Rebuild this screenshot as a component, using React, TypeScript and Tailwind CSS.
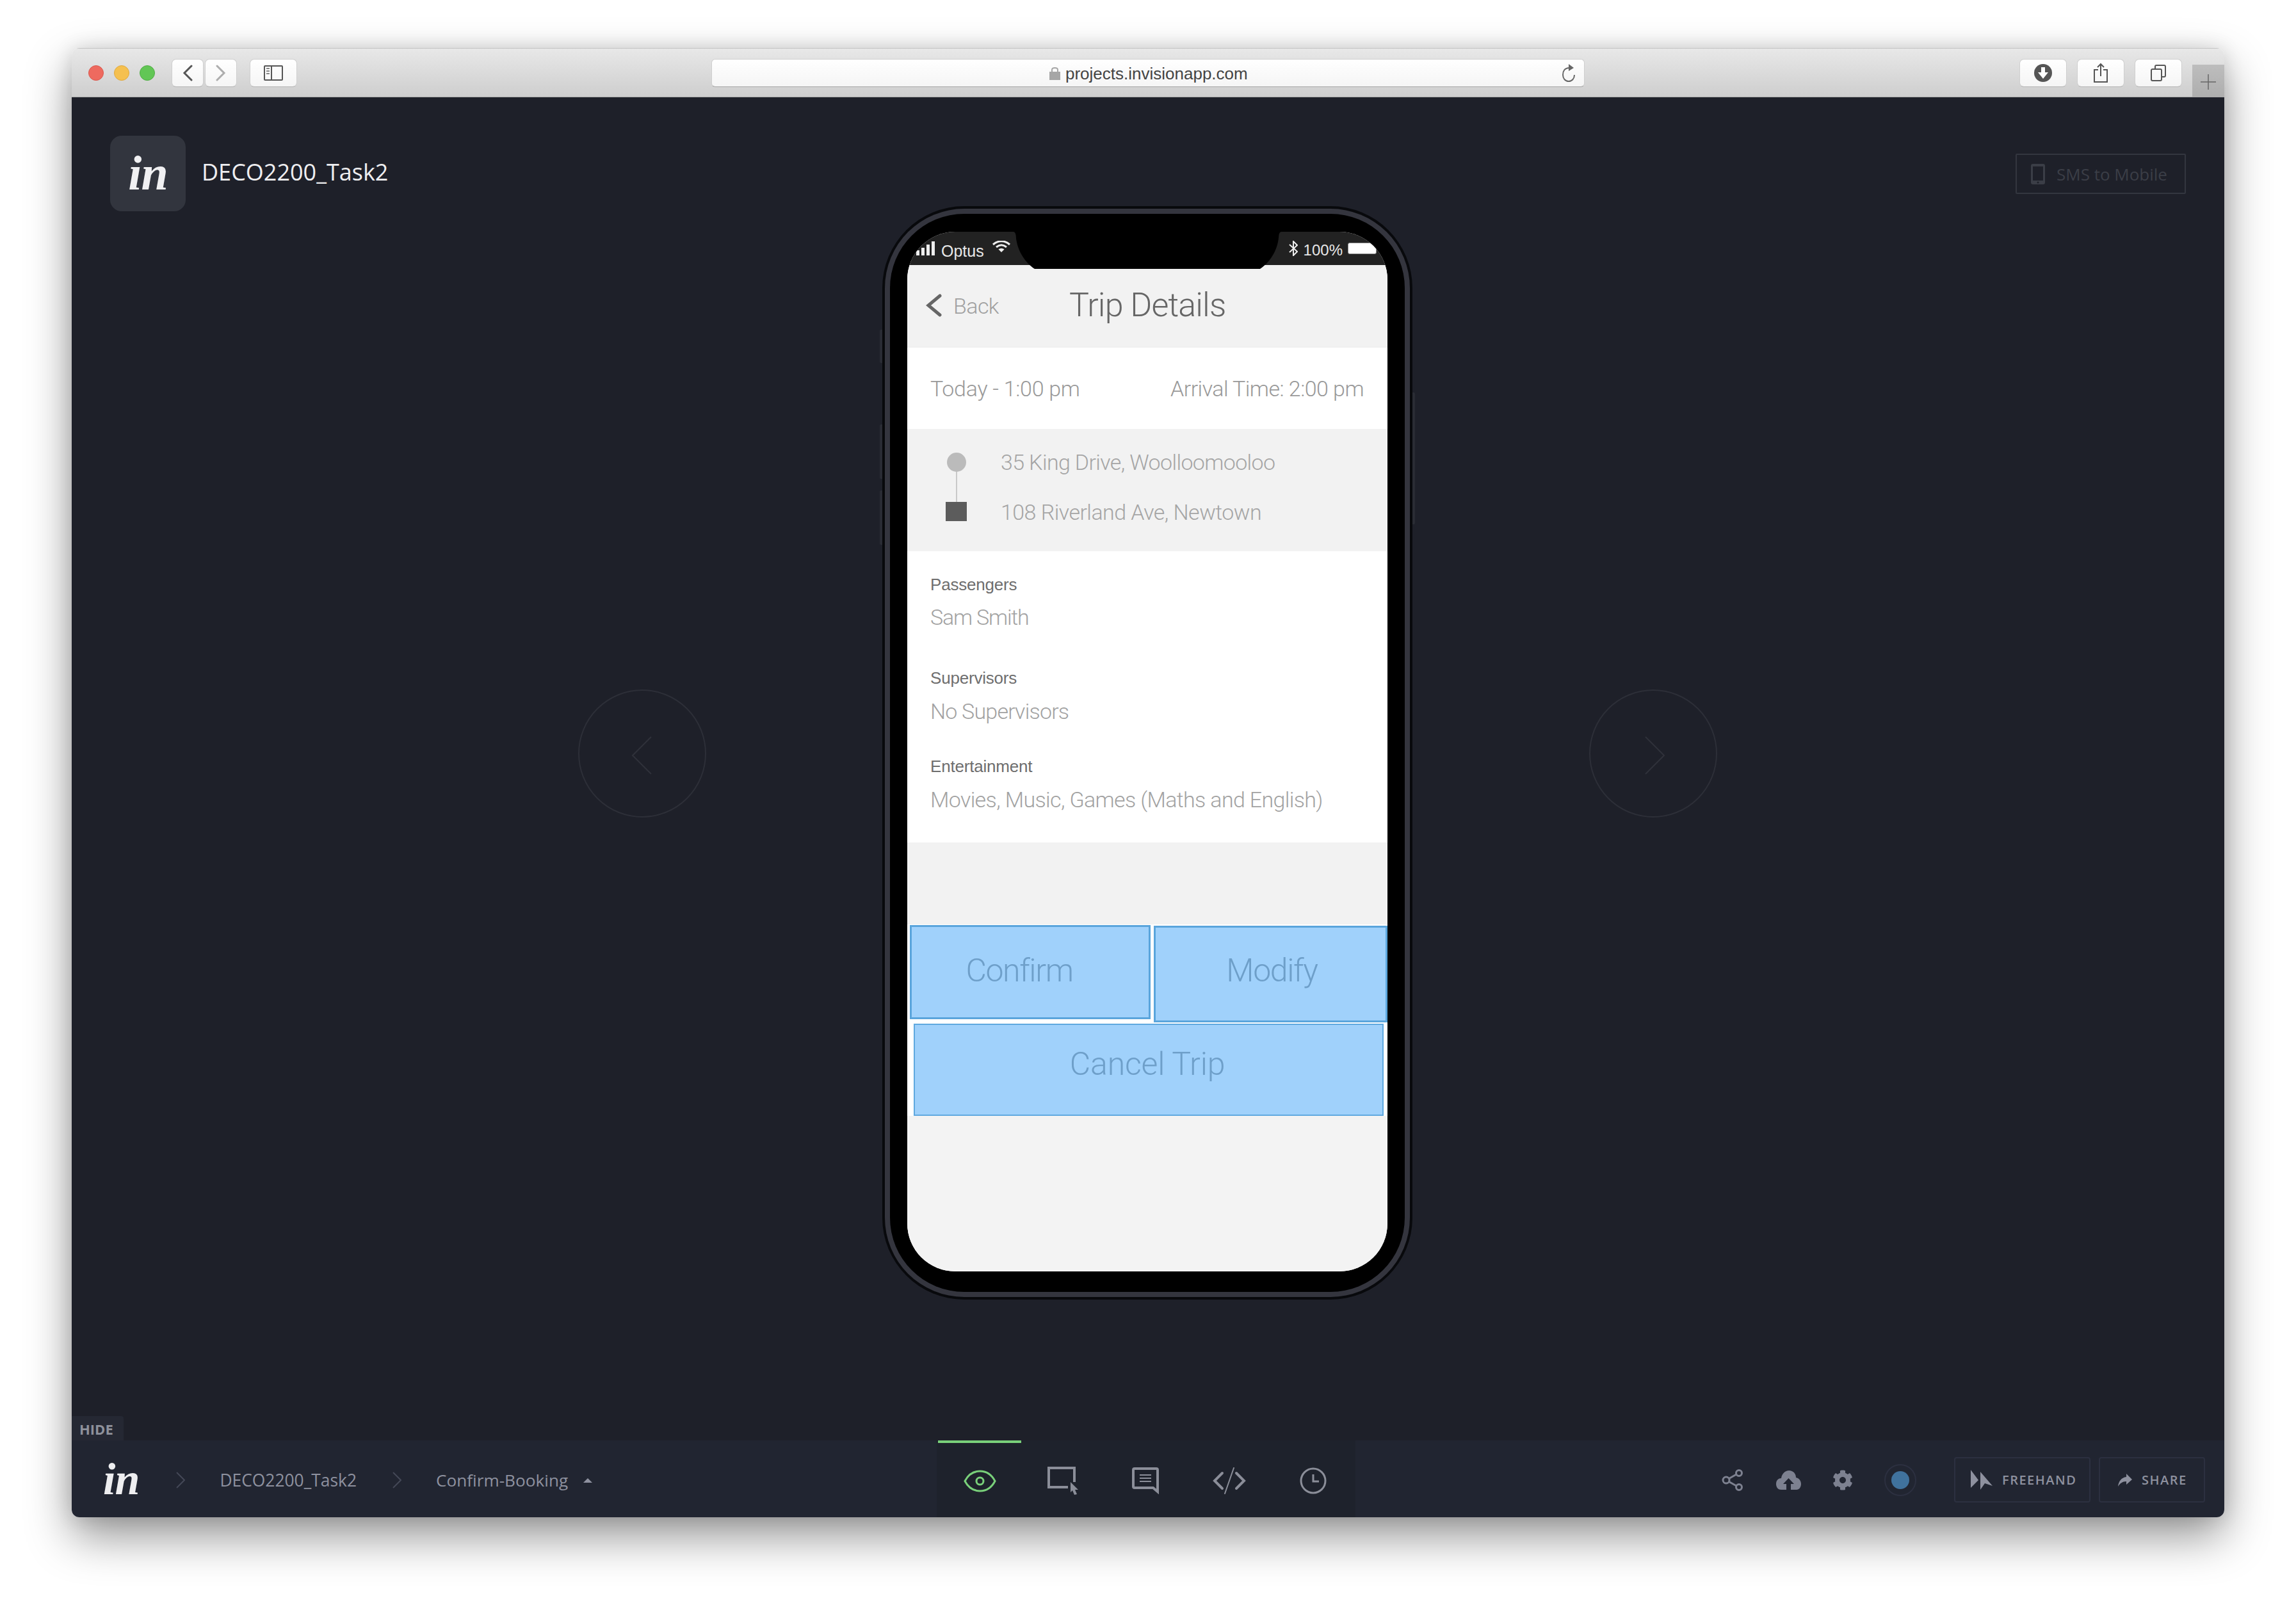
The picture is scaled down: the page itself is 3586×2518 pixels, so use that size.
import React from "react";
import { FaCog } from "react-icons/fa";

const light = "font-['Roboto','Liberation_Sans',sans-serif] font-light";
const open = "font-['Open_Sans','Noto_Sans',sans-serif]";

function ToolBtn({ w, children }: { w: string; children: React.ReactNode }) {
  return (
    <div className={`${w} h-[44px] rounded-[7px] border border-[#cfcfcf] border-b-[#b5b5b5] bg-gradient-to-b from-white to-[#f5f5f5] flex items-center justify-center`}>
      {children}
    </div>
  );
}

function Field({ label, value, mt, gap, track }: { label: string; value: string; mt: string; gap: string; track: string }) {
  return (
    <div className={`${mt} flex flex-col`}>
      <div className="font-['Liberation_Sans',sans-serif] text-[26px] leading-[30px] tracking-[-0.2px] text-[#6e6e6e]">{label}</div>
      <div className={`${gap} ${track} ${light} text-[34px] leading-[40px] text-[#a2a2a2]`}>{value}</div>
    </div>
  );
}

function Arrow({ dir }: { dir: "l" | "r" }) {
  return (
    <div className="w-[200px] h-[200px] rounded-full border-2 border-[#2d2f38] flex items-center justify-center">
      <svg className={dir === "l" ? "mt-[6px]" : "mt-[6px] ml-[4px]"} width="34" height="60" viewBox="0 0 34 60" fill="none" stroke="#2f313a" strokeWidth="2">
        {dir === "l" ? <path d="M31 1 L2 30 L31 59" /> : <path d="M3 1 L32 30 L3 59" />}
      </svg>
    </div>
  );
}

function Phone() {
  return (
    <div className="relative mt-[170px] shrink-0 w-[828px] h-[1708px]">
      <div className="absolute -left-[4px] top-[193px] w-[4px] h-[52px] bg-[#2a2c34] rounded-l-[2px]" />
      <div className="absolute -left-[4px] top-[341px] w-[4px] h-[85px] bg-[#2a2c34] rounded-l-[2px]" />
      <div className="absolute -left-[4px] top-[444px] w-[4px] h-[85px] bg-[#2a2c34] rounded-l-[2px]" />
      <div className="absolute -right-[4px] top-[291px] w-[4px] h-[206px] bg-[#2a2c34] rounded-r-[2px]" />
      <div className="w-full h-full rounded-[128px] bg-[#08090c] p-[4px]">
        <div className="w-full h-full rounded-[124px] bg-[#34353e] p-[8px]">
          <div className="w-full h-full rounded-[116px] bg-black pt-[28px] pb-[32px] px-[27px]">
            <div className="relative w-[750px] h-[1624px] rounded-[75px] overflow-hidden bg-[#f3f3f3] flex flex-col">
              <StatusBar />
              <div className="h-[127px] shrink-0 bg-[#f2f2f2] flex items-center">
                <svg className="ml-[28px] mt-[-2px]" width="28" height="36" viewBox="0 0 28 36" fill="none" stroke="#666" strokeWidth="5" strokeLinecap="round">
                  <path d="M23 3 L5 18 L23 33" />
                </svg>
                <div className={`ml-[16px] mt-[0px] w-[74px] ${light} text-[34px] leading-[40px] tracking-[-0.6px] text-[#a0a0a0]`}>Back</div>
                <div className={`ml-[107px] mt-[-2px] ${light} text-[52px] leading-[60px] tracking-[-0.9px] text-[#666]`}>Trip Details</div>
              </div>
              <div className={`h-[129px] shrink-0 bg-white border-t-2 border-[#f0f0f0] flex items-center justify-between pl-[36px] pr-[37px] ${light} text-[34px] leading-[40px] text-[#999]`}>
                <span className="tracking-[-0.3px]">Today - 1:00 pm</span>
                <span className="tracking-[-0.55px]">Arrival Time: 2:00 pm</span>
              </div>
              <div className="h-[191px] shrink-0 bg-[#f2f2f2] flex items-start">
                <div className="ml-[60px] mt-[37px] w-[33px] flex flex-col items-center">
                  <div className="w-[30px] h-[30px] rounded-full bg-[#bbbbbb]" />
                  <div className="w-[2px] h-[47px] bg-[#c9c9c9]" />
                  <div className="w-[33px] h-[30px] bg-[#5c5c5c]" />
                </div>
                <div className={`ml-[53px] mt-[32px] flex flex-col gap-[38px] ${light} text-[34px] leading-[40px] text-[#a5a5a5]`}>
                  <div className="tracking-[-0.64px]">35 King Drive, Woolloomooloo</div>
                  <div className="tracking-[-0.55px]">108 Riverland Ave, Newtown</div>
                </div>
              </div>
              <div className="h-[455px] shrink-0 bg-white pl-[36px] flex flex-col">
                <Field label="Passengers" value="Sam Smith" mt="mt-[37px]" gap="mt-[16px]" track="tracking-[-1.2px]" />
                <Field label="Supervisors" value="No Supervisors" mt="mt-[60px]" gap="mt-[17px]" track="tracking-[-0.8px]" />
                <Field label="Entertainment" value="Movies, Music, Games (Maths and English)" mt="mt-[51px]" gap="mt-[17px]" track="tracking-[-0.65px]" />
              </div>
              <div className="h-[128px] shrink-0 bg-[#f2f2f2]" />
              <div className={`h-[299px] shrink-0 bg-white ${light} text-[50px] tracking-[-1.4px] text-[#6e9fc9]`}>
                <div className="flex items-start">
                  <div className="ml-[4px] mt-[1px] w-[376px] h-[147px] bg-[#a0d1fb] border-[3px] border-[#5aa5dc] flex items-center justify-center pr-[34px] pb-[4px]">Confirm</div>
                  <div className="ml-[5px] mt-[2px] w-[365px] h-[151px] bg-[#a0d1fb] border-[3px] border-[#5aa5dc] flex items-center justify-center pl-[4px] pb-[10px]">Modify</div>
                </div>
                <div className="ml-[10px] mt-[2px] w-[734px] h-[144px] bg-[#a0d1fb] border-2 border-[#5fa8df] flex items-center justify-center pb-[18px] pr-[4px] tracking-[-0.2px]">Cancel Trip</div>
              </div>
              <div className="flex-1 bg-[#f3f3f3]" />
              <svg className="absolute left-[165px] top-0" width="420" height="58" viewBox="0 0 420 58" fill="#000">
                <path d="M0 0 C6 0 4 8 6 16 C10 36 24 52 34 58 H386 C396 52 410 36 414 16 C416 8 414 0 420 0Z" />
              </svg>
            </div>
          </div>
        </div>
      </div>
    </div>
  );
}

function StatusBar() {
  return (
    <div className="h-[52px] shrink-0 bg-[#222222] flex items-center text-[#e8e8e8] font-['Liberation_Sans',sans-serif]">
      <svg className="ml-[14px]" width="31" height="22" viewBox="0 0 31 22" fill="#eee">
        <rect x="0" y="14" width="5" height="8" />
        <rect x="8" y="10" width="5" height="12" />
        <rect x="16" y="5" width="5" height="17" />
        <rect x="24" y="0" width="5" height="22" />
      </svg>
      <span className="ml-[8px] text-[25px] leading-[30px] mt-[8px]">Optus</span>
      <svg className="ml-[13px] -mt-[6px]" width="28" height="18" viewBox="0 0 28 18" fill="none" stroke="#eee" strokeWidth="3">
        <path d="M1 6 C9 -1 19 -1 27 6" />
        <path d="M6 10 C11 6 17 6 22 10" />
        <path d="M14 18 L9.500 13.500 C12 11.500 16 11.500 18.500 13.500 Z" fill="#eee" stroke="none" />
      </svg>
      <svg className="ml-auto" width="14" height="24" viewBox="0 0 14 24" fill="none" stroke="#eee" strokeWidth="2">
        <path d="M1 6 L13 17 L7 23 V1 L13 7 L1 18" />
      </svg>
      <span className="ml-[9px] text-[24px] leading-[30px] mt-[6px]">100%</span>
      <div className="ml-[8px] mr-[17px] w-[45px] h-[18px] border border-[#888] rounded-[3px] bg-white" />
    </div>
  );
}

export default function App() {
  return (
    <div className="w-[3586px] h-[2518px] bg-white pt-[75px] pl-[112px] overflow-hidden">
      <div className="w-[3362px] h-[2295px] flex flex-col rounded-[12px] overflow-hidden shadow-[0_30px_70px_rgba(0,0,0,0.42),0_0_30px_rgba(0,0,0,0.12)]">
        {/* title bar */}
        <div className="h-[77px] shrink-0 bg-gradient-to-b from-[#e8e8e8] to-[#cecece] border-t border-[#c4c4c4] border-b border-b-[#a9a9a9] flex items-start pt-[16px] pl-[26px]">
          <div className="flex gap-[16px] mt-[10px]">
            <div className="w-[24px] h-[24px] rounded-full bg-[#ee6a5f] border border-[#d9584e]" />
            <div className="w-[24px] h-[24px] rounded-full bg-[#f5c04f] border border-[#dfa93f]" />
            <div className="w-[24px] h-[24px] rounded-full bg-[#62c655] border border-[#50ad45]" />
          </div>
          <div className="ml-[26px] flex gap-[2px]">
            <ToolBtn w="w-[50px]">
              <svg width="16" height="26" viewBox="0 0 16 26" fill="none" stroke="#555" strokeWidth="3" strokeLinecap="round"><path d="M14 2 L3 13 L14 24" /></svg>
            </ToolBtn>
            <ToolBtn w="w-[50px]">
              <svg width="16" height="26" viewBox="0 0 16 26" fill="none" stroke="#adadad" strokeWidth="3" strokeLinecap="round"><path d="M2 2 L13 13 L2 24" /></svg>
            </ToolBtn>
          </div>
          <div className="ml-[20px]">
            <ToolBtn w="w-[74px]">
              <svg width="30" height="24" viewBox="0 0 30 24" fill="none" stroke="#555" strokeWidth="2">
                <rect x="1" y="1" width="28" height="22" rx="1" />
                <path d="M12 1 V23" />
                <path d="M4 5 H9 M4 9 H9 M4 13 H9" strokeWidth="2" stroke="#888" />
              </svg>
            </ToolBtn>
          </div>
          <div className="ml-[647px] w-[1364px] h-[44px] rounded-[6px] border border-[#cfcfcf] border-b-[#a6a6a6] bg-gradient-to-b from-white to-[#f5f5f5] flex items-center pl-[527px] pr-[13px]">
            <svg width="17" height="22" viewBox="0 0 17 22" fill="none">
              <path d="M4 10 V6 C4 2 13 2 13 6 V10" stroke="#a6a6a6" strokeWidth="2" />
              <rect x="0" y="9" width="17" height="13" fill="#a6a6a6" />
            </svg>
            <span className="ml-[8px] font-['Liberation_Sans',sans-serif] text-[26px] leading-[30px] text-[#444] mt-[2px]">projects.invisionapp.com</span>
            <svg className="ml-auto" width="22" height="28" viewBox="0 0 22 28" fill="none" stroke="#666" strokeWidth="2">
              <path d="M12 6 C5 6 2 11 2 17 C2 23 6 27 11 27 C16 27 20 23 20 17" />
              <path d="M11 0 L19 6 L11 11 Z" fill="#666" stroke="none" />
            </svg>
          </div>
          <div className="ml-[679px] flex gap-[16px]">
            <ToolBtn w="w-[74px]">
              <svg width="28" height="28" viewBox="0 0 28 28">
                <circle cx="14" cy="14" r="14" fill="#555" />
                <path d="M11 5 H17 V13 H22 L14 23 L6 13 H11 Z" fill="#fff" />
              </svg>
            </ToolBtn>
            <ToolBtn w="w-[74px]">
              <svg width="24" height="32" viewBox="0 0 24 32" fill="none" stroke="#555" strokeWidth="2">
                <path d="M8 11 H2 V30 H22 V11 H16" />
                <path d="M12 21 V2 M7 7 L12 2 L17 7" />
              </svg>
            </ToolBtn>
            <ToolBtn w="w-[74px]">
              <svg width="24" height="26" viewBox="0 0 24 26" fill="none" stroke="#555" strokeWidth="2">
                <rect x="1" y="7" width="16" height="18" rx="2" />
                <path d="M7 6 V3 C7 2 8 1 9 1 H21 C22 1 23 2 23 3 V17 C23 18 22 19 21 19 H18" />
              </svg>
            </ToolBtn>
          </div>
          <div className="ml-[16px] mt-[9px] w-[50px] h-[50px] bg-gradient-to-b from-[#bdbdbd] to-[#aeaeae] flex items-center justify-center pt-[4px]">
            <svg width="24" height="24" viewBox="0 0 24 24" stroke="#666" strokeWidth="1.500"><path d="M0 12 H24 M12 0 V24" /></svg>
          </div>
        </div>

        {/* canvas */}
        <div className="flex-1 min-h-0 bg-[#1e2029] flex">
          <div className="w-[1266px] shrink-0 flex flex-col">
            <div className="ml-[60px] mt-[60px] flex items-center">
              <div className="w-[118px] h-[118px] rounded-[18px] bg-[#32353e] flex items-center justify-center">
                <span className="font-['Liberation_Serif',serif] italic font-bold text-[76px] leading-[74px] tracking-[-1px] text-[#f0f0f2] mt-[-2px]">in</span>
              </div>
              <span className={`ml-[25px] ${open} text-[36px] leading-[48px] text-[#eeeef0] mt-[-4px]`}>DECO2200_Task2</span>
            </div>
            <div className="ml-[791px] mt-[747px]">
              <Arrow dir="l" />
            </div>
            <div className="mt-auto w-[81px] h-[38px] bg-[#252833] rounded-tr-[4px] flex items-center pl-[12px]">
              <span className={`${open} font-bold text-[22px] leading-[24px] text-[#8e919b] mt-[2px]`}>HIDE</span>
            </div>
          </div>
          <Phone />
          <div className="flex-1 min-w-0 flex flex-col pr-[60px]">
            <div className="self-end mt-[88px] w-[266px] h-[63px] rounded-[2px] border-2 border-[#33363f] flex items-center pl-[22px]">
              <svg width="22" height="32" viewBox="0 0 22 32">
                <rect x="0" y="0" width="22" height="32" rx="3" fill="#3b3e47" />
                <rect x="3" y="4" width="16" height="22" fill="#1e2029" />
                <circle cx="11" cy="29" r="1.500" fill="#1e2029" />
              </svg>
              <span className={`ml-[18px] ${open} text-[26px] leading-[36px] text-[#3b3e47] mt-[1px]`}>SMS to Mobile</span>
            </div>
            <div className="ml-[276px] mt-[774px] self-start">
              <Arrow dir="r" />
            </div>
          </div>
        </div>

        {/* bottom bar */}
        <div className="h-[120px] shrink-0 bg-[#212531] flex items-stretch">
          <div className="w-[1351px] shrink-0 flex items-center pt-[4px]">
            <span className="ml-[49px] font-['Liberation_Serif',serif] italic font-bold text-[70px] leading-[68px] tracking-[-1px] text-[#eeeef0] -mt-[2px]">in</span>
            <svg className="ml-[58px]" width="14" height="26" viewBox="0 0 14 26" fill="none" stroke="#444857" strokeWidth="2"><path d="M1 1 L13 13 L1 25" /></svg>
            <span className={`ml-[54px] ${open} text-[26.400px] leading-[32px] text-[#8e919f]`}>DECO2200_Task2</span>
            <svg className="ml-[56px]" width="14" height="26" viewBox="0 0 14 26" fill="none" stroke="#444857" strokeWidth="2"><path d="M1 1 L13 13 L1 25" /></svg>
            <span className={`ml-[54px] ${open} text-[26.200px] leading-[32px] text-[#8e919f]`}>Confirm-Booking</span>
            <svg className="ml-[24px]" width="14" height="7" viewBox="0 0 14 7" fill="#8e919f"><path d="M7 0 L14 7 H0 Z" /></svg>
          </div>
          <div className="w-[654px] shrink-0 bg-[#1e222c] flex flex-col">
            <div className="ml-[2px] w-[130px] h-[4px] bg-[#79d07a]" />
            <div className="flex-1 flex items-center pl-[42px] mt-[2px]">
              <svg width="51" height="35" viewBox="0 0 51 35" fill="none" stroke="#79d07a" strokeWidth="3">
                <path d="M2 17.500 C8 6 16 2 25.500 2 S43 6 49 17.500 C43 29 35 33 25.500 33 S8 29 2 17.500 Z" />
                <circle cx="25.500" cy="17.500" r="5.500" />
              </svg>
              <svg className="ml-[80px]" width="49" height="44" viewBox="0 0 49 44" fill="none" stroke="#8b8e99" strokeWidth="4">
                <path d="M32 32 H2 V2 H42 V24" />
                <path d="M36 24 L48 36 H43 L46 43 L42 44 L39 37 L36 40 Z" fill="#8b8e99" stroke="none" />
              </svg>
              <svg className="ml-[83px]" width="42" height="42" viewBox="0 0 42 42" fill="none" stroke="#8b8e99" strokeWidth="4">
                <path d="M4 2 H38 Q40 2 40 4 V38 L33 32 H4 Q2 32 2 30 V4 Q2 2 4 2 Z" />
                <path d="M12 12 H30 M12 17 H30 M12 22 H30" strokeWidth="2" />
              </svg>
              <svg className="ml-[84px]" width="52" height="42" viewBox="0 0 52 42" fill="none" stroke="#8b8e99" strokeWidth="4" strokeLinecap="round">
                <path d="M15 9 L3 21 L15 33" />
                <path d="M37 9 L49 21 L37 33" />
                <path d="M33 1 L19 41" strokeWidth="2" />
              </svg>
              <svg className="ml-[84px]" width="42" height="42" viewBox="0 0 42 42" fill="none" stroke="#8b8e99" strokeWidth="3">
                <circle cx="21" cy="21" r="19" />
                <path d="M21 11 V22 H30" />
              </svg>
            </div>
          </div>
          <div className="flex-1 flex items-center pl-[572px] pt-[3px]">
            <svg width="34" height="34" viewBox="0 0 34 34" fill="none" stroke="#7d8190" strokeWidth="3">
              <circle cx="7" cy="17" r="5" />
              <circle cx="27" cy="6" r="4.500" />
              <circle cx="27" cy="28" r="4.500" />
              <path d="M11.500 14.500 L23 8 M11.500 19.500 L23 26" />
            </svg>
            <svg className="ml-[51px]" width="39" height="30" viewBox="0 0 39 30" fill="#7d8190">
              <path d="M8 30 C2 30 0 25 0 21 C0 15 4 12 8 12 C9 5 14 0 20 0 C27 0 31 5 31 11 C36 12 39 16 39 21 C39 26 36 30 32 30 Z" />
              <path d="M19.500 12 L28 21 H23 V30 H16 V21 H11 Z" fill="#212531" />
            </svg>
            <FaCog className="ml-[49px] text-[#7d8190]" size={32} />
            <div className="ml-[49px] w-[50px] h-[50px] rounded-full border-2 border-[#2c3040] flex items-center justify-center">
              <div className="w-[28px] h-[28px] rounded-full bg-[#40729d]" />
            </div>
            <div className="ml-[59px] w-[213px] h-[71px] rounded-[4px] border-2 border-[#2c3040] flex items-center pl-[24px]">
              <svg width="34" height="31" viewBox="0 0 34 31" fill="#8e919f">
                <path d="M0 0 L12 16 L0 28 Z" />
                <path d="M15 3 L34 25 L22 21 L15 31 Z" />
              </svg>
              <span className={`ml-[15px] ${open} font-semibold text-[20px] leading-[24px] tracking-[1.5px] text-[#8e919f]`}>FREEHAND</span>
            </div>
            <div className="ml-[13px] w-[166px] h-[71px] rounded-[4px] border-2 border-[#2c3040] flex items-center pl-[28px]">
              <svg width="22" height="20" viewBox="0 0 22 20" fill="#8e919f">
                <path d="M13 0 L22 9 L13 17 V12 C7 12 3 15 0 20 C1 12 5 6 13 5 Z" />
              </svg>
              <span className={`ml-[15px] ${open} font-semibold text-[20px] leading-[24px] tracking-[1.5px] text-[#8e919f]`}>SHARE</span>
            </div>
          </div>
        </div>
      </div>
    </div>
  );
}
